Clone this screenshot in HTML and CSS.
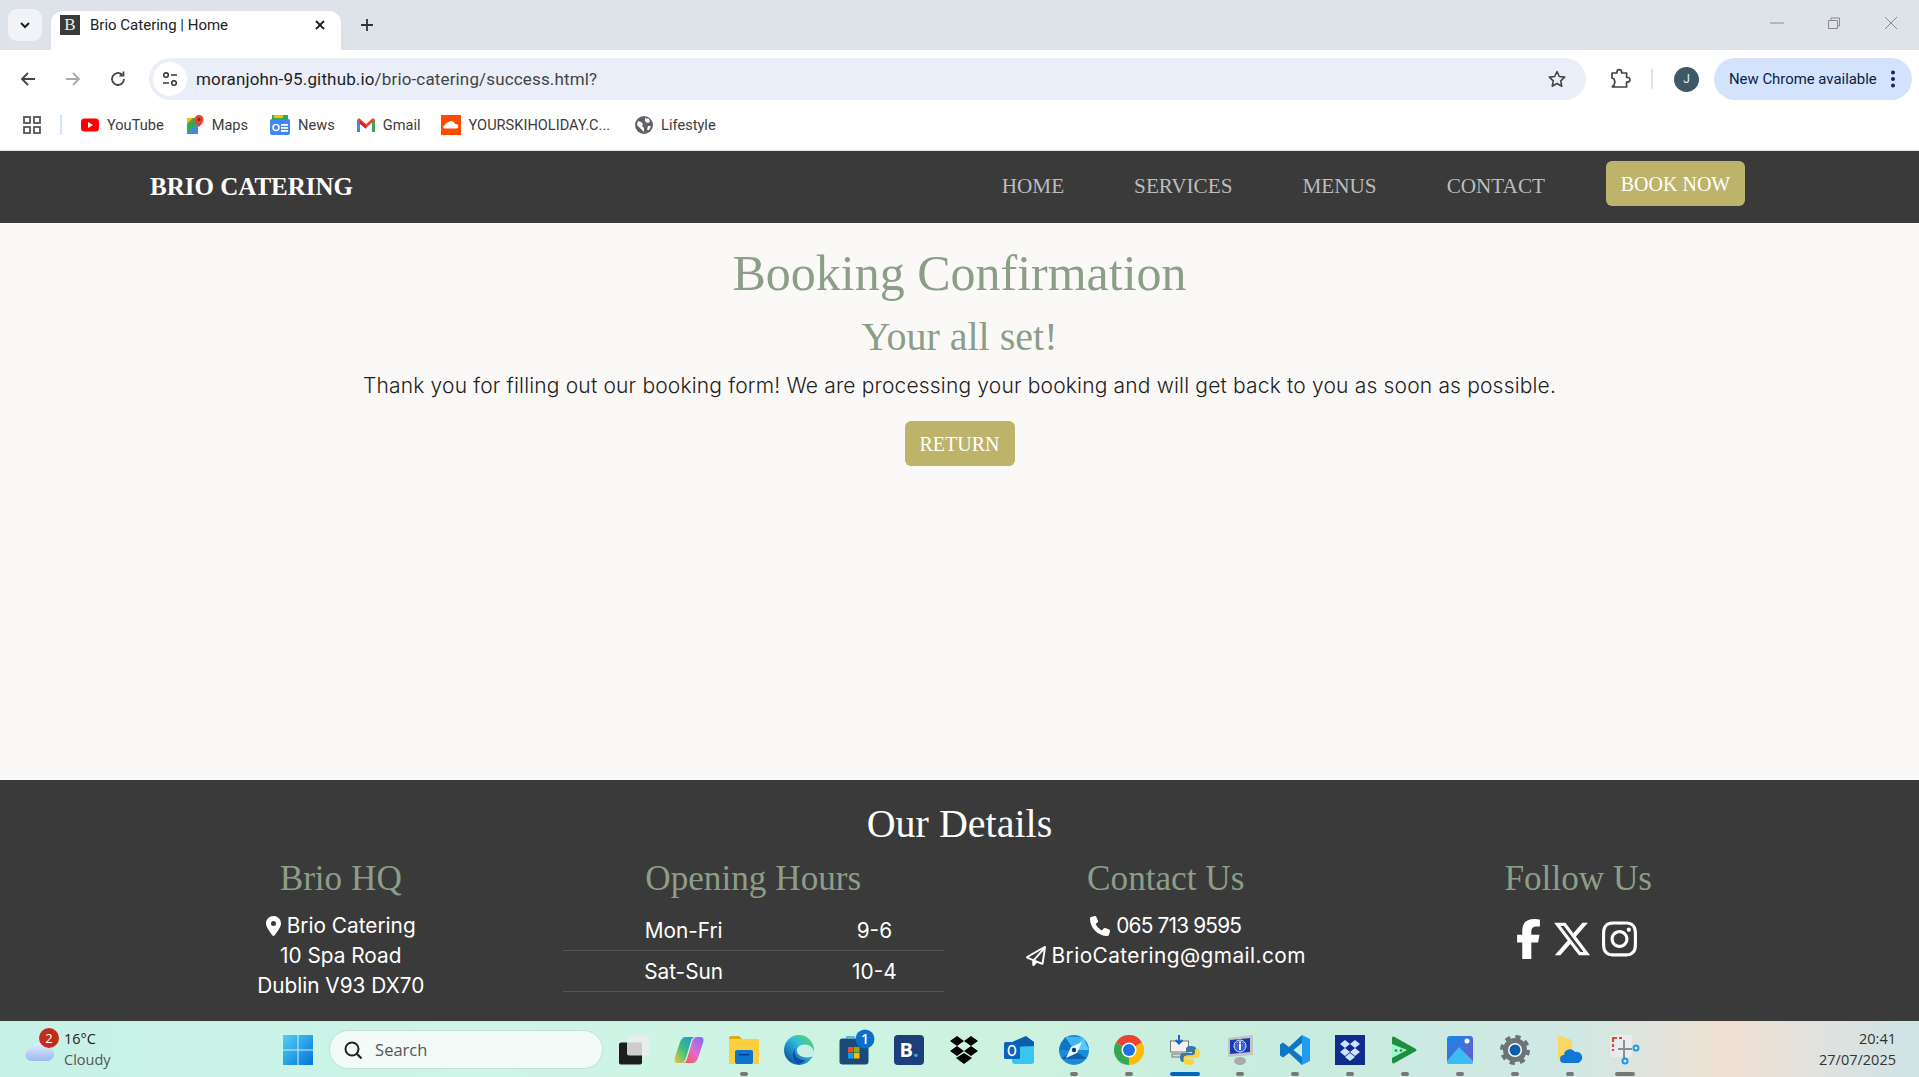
FILE: index.html
```html
<!DOCTYPE html>
<html lang="en">
<head>
<meta charset="utf-8">
<title>Brio Catering | Home</title>
<link rel="stylesheet" href="styles.css">
</head>
<body>
<div class="screen">
  <header class="browser">
    <div class="tabstrip">
      <button class="tab-search"><svg width="14" height="14" viewBox="0 0 14 14"><path d="M3 5l4 4 4-4" fill="none" stroke="#1f1f1f" stroke-width="2"/></svg></button>
      <div class="tab">
        <span class="favicon">B</span>
        <span class="tab-title">Brio Catering | Home</span>
        <svg class="tab-close" width="12" height="12" viewBox="0 0 12 12"><path d="M2 2l8 8M10 2l-8 8" stroke="#1f1f1f" stroke-width="1.8"/></svg>
      </div>
      <svg class="new-tab" width="14" height="14" viewBox="0 0 14 14"><path d="M7 1v12M1 7h12" stroke="#333" stroke-width="1.8"/></svg>
      <div class="win-controls">
        <svg width="14" height="14" viewBox="0 0 14 14"><path d="M0 7h14" stroke="#8a8a8a" stroke-width="1"/></svg>
        <svg width="14" height="14" viewBox="0 0 14 14"><path d="M1.500 4.500h9v8h-9zM4 4.500V2h8.500v8h-2" fill="none" stroke="#8a8a8a" stroke-width="1"/></svg>
        <svg width="14" height="14" viewBox="0 0 14 14"><path d="M1 1l12 12M13 1L1 13" stroke="#8a8a8a" stroke-width="1"/></svg>
      </div>
    </div>
    <div class="toolbar">
      <svg class="tool" width="18" height="18" viewBox="0 0 18 18"><path d="M16 9H3M9 3L3 9l6 6" fill="none" stroke="#444" stroke-width="1.8"/></svg>
      <svg class="tool" width="18" height="18" viewBox="0 0 18 18"><path d="M2 9h13M9 3l6 6-6 6" fill="none" stroke="#aaa" stroke-width="1.800"/></svg>
      <svg class="tool" width="18" height="18" viewBox="0 0 18 18"><path d="M15 9a6 6 0 1 1-2-4.500M14.500 1.500v4h-4" fill="none" stroke="#444" stroke-width="1.8"/></svg>
      <div class="omnibox">
        <span class="site-info"><svg width="16" height="16" viewBox="0 0 16 16"><circle cx="4" cy="4" r="2.300" fill="none" stroke="#333" stroke-width="1.500"/><path d="M9 4h6M1 12h6" stroke="#333" stroke-width="1.500"/><circle cx="12" cy="12" r="2.300" fill="none" stroke="#333" stroke-width="1.500"/></svg></span>
        <span class="url">moranjohn-95.github.io<span class="url-path">/brio-catering/success.html?</span></span>
        <svg class="star" width="20" height="20" viewBox="0 0 20 20"><path d="M10 2.500l2.300 5 5.400.6-4 3.700 1.100 5.400-4.800-2.700-4.800 2.700 1.100-5.400-4-3.700 5.400-.6z" fill="none" stroke="#444" stroke-width="1.600" stroke-linejoin="round"/></svg>
      </div>
      <svg class="puzzle" width="22" height="22" viewBox="0 0 22 22"><path d="M3 5h5V4a2.300 2.300 0 0 1 4.600 0v1h5v4.500h1a2.300 2.300 0 0 1 0 4.600h-1V19H3.500v-1H5v-1.500L6 14l-1-3-2-1z" fill="none" stroke="#444" stroke-width="1.700" stroke-linejoin="round"/></svg>
      <span class="tool-divider"></span>
      <span class="avatar">J</span>
      <div class="update-pill">
        <span>New Chrome available</span>
        <svg width="6" height="18" viewBox="0 0 6 18"><circle cx="3" cy="2.500" r="2" fill="#0b2a66"/><circle cx="3" cy="9" r="2" fill="#0b2a66"/><circle cx="3" cy="15.500" r="2" fill="#0b2a66"/></svg>
      </div>
    </div>
    <div class="bookmarks">
      <svg class="apps" width="18" height="18" viewBox="0 0 18 18"><g fill="none" stroke="#555" stroke-width="1.800"><rect x="1" y="1" width="6" height="6"/><rect x="11" y="1" width="6" height="6"/><rect x="1" y="11" width="6" height="6"/><rect x="11" y="11" width="6" height="6"/></g></svg>
      <span class="bm-divider"></span>
      <a class="bm"><svg width="18" height="18" viewBox="0 0 18 18"><rect y="2.500" width="18" height="13" rx="3.500" fill="#f00"/><path d="M7 6l5 3-5 3z" fill="#fff"/></svg>YouTube</a>
      <a class="bm"><svg width="18" height="20" viewBox="0 0 18 20"><path d="M1 3h11v16H1z" fill="#34a853"/><path d="M1 19l11-11v11z" fill="#4285f4"/><path d="M1 3h6L1 9z" fill="#fbbc04"/><path d="M13 0a4.500 4.500 0 0 1 4.500 4.500C17.500 8 13 12 13 12S8.500 8 8.500 4.500A4.500 4.500 0 0 1 13 0z" fill="#ea4335"/><circle cx="13" cy="4.500" r="1.500" fill="#8c1c13"/></svg>Maps</a>
      <a class="bm"><svg width="20" height="20" viewBox="0 0 20 20"><path d="M2 0h16v8H2z" fill="#34a853"/><path d="M4 0h9v3H4z" fill="#fbbc04"/><rect y="4" width="20" height="16" rx="2" fill="#4285f4"/><rect x="11" y="9" width="7" height="1.800" fill="#fff"/><rect x="11" y="12" width="7" height="1.800" fill="#fff"/><rect x="11" y="15" width="7" height="1.800" fill="#fff"/><circle cx="6" cy="12.500" r="3" fill="none" stroke="#fff" stroke-width="1.500"/></svg>News</a>
      <a class="bm bm-gmail"><svg width="18" height="14" viewBox="0 0 18 14"><path d="M0 14V2l3 1v11z" fill="#4285f4"/><path d="M15 14V3l3-1v12z" fill="#34a853"/><path d="M0 2l2-2 7 6 7-6 2 2-9 8z" fill="#ea4335"/><path d="M3 3l6 5v3L3 6z" fill="#c5221f"/></svg>Gmail</a>
      <a class="bm bm-ski"><svg width="20" height="20" viewBox="0 0 20 20"><rect width="20" height="20" fill="#ff4a00"/><path d="M3 13.500a2 2 0 0 1 1-3.500 3 3 0 0 1 3-2.500 4 4 0 0 1 7 1.500h1.500a2.300 2.300 0 0 1 0 4.500z" fill="#fff"/></svg>YOURSKIHOLIDAY.C...</a>
      <a class="bm"><svg width="18" height="18" viewBox="0 0 18 18"><circle cx="9" cy="9" r="9" fill="#5f6368"/><path d="M3 5l3 1 2 2-1 2 2 2v4L5 12 2 9zM10 2l4 1 1 3-3 1-2-2zM13 10l3 0-2 4-2 0z" fill="#fff"/></svg>Lifestyle</a>
    </div>
  </header>

  <nav class="site-nav">
    <a class="brand">BRIO CATERING</a>
    <ul class="nav-links">
      <li>HOME</li>
      <li>SERVICES</li>
      <li>MENUS</li>
      <li>CONTACT</li>
    </ul>
    <a class="btn btn-nav">BOOK NOW</a>
  </nav>

  <main class="content">
    <h1>Booking Confirmation</h1>
    <h2>Your all set!</h2>
    <p>Thank you for filling out our booking form! We are processing your booking and will get back to you as soon as possible.</p>
    <a class="btn btn-return">RETURN</a>
  </main>

  <footer class="site-footer">
    <h2 class="footer-title">Our Details</h2>
    <div class="footer-grid">
      <section class="col">
        <h3>Brio HQ</h3>
        <p class="line"><svg class="ico" viewBox="0 0 384 512" width="15" height="20"><path d="M215.700 499.200C267 435 384 279.400 384 192C384 86 298 0 192 0S0 86 0 192c0 87.400 117 243 168.300 307.200c12.300 15.300 35.100 15.300 47.400 0zM192 128a64 64 0 1 1 0 128 64 64 0 1 1 0-128z"/></svg> Brio Catering</p>
        <p class="line">10 Spa Road</p>
        <p class="line">Dublin V93 DX70</p>
      </section>
      <section class="col">
        <h3>Opening Hours</h3>
        <div class="hours">
          <div class="row"><span>Mon-Fri</span><span>9-6</span></div>
          <div class="row"><span>Sat-Sun</span><span>10-4</span></div>
        </div>
      </section>
      <section class="col">
        <h3>Contact Us</h3>
        <p class="line"><svg class="ico" viewBox="0 0 512 512" width="20" height="20"><path d="M164.900 24.600c-7.700-18.600-28-28.500-47.400-23.200l-88 24C12.100 30.200 0 46 0 64C0 311.400 200.600 512 448 512c18 0 33.800-12.100 38.600-29.500l24-88c5.300-19.400-4.600-39.700-23.200-47.400l-96-40c-16.300-6.800-35.200-2.100-46.300 11.600L304.700 368C234.300 334.700 177.300 277.700 144 207.300L193.300 167c13.700-11.200 18.400-30 11.600-46.300l-40-96z"/></svg> <span class="phone">065 713 9595</span></p>
        <p class="line"><svg class="ico" viewBox="0 0 512 512" width="20" height="20"><path d="M16.100 260.200c-22.600 12.900-20.500 47.300 3.600 57.300L160 376V479.300c0 18.100 14.600 32.700 32.700 32.700c9.700 0 18.900-4.300 25.100-11.800l62-74.300 123.900 51.600c18.900 7.900 40.800-4.500 43.900-24.700l64-416c1.900-12.100-3.400-24.300-13.500-31.200s-23.300-7.500-34-1.400l-448 256zm52.100 25.500L409.700 90.600 190.100 336l1.200 1L68.200 285.700zM403.300 425.400L236.700 355.900 450.800 116.600 403.300 425.400z"/></svg> <span class="email">BrioCatering@gmail.com</span></p>
      </section>
      <section class="col">
        <h3>Follow Us</h3>
        <div class="social">
          <svg class="ico ico-f" viewBox="0 0 320 512" width="25" height="40"><path d="M80 299.300V512H196V299.300h86.500l18-97.800H196V166.900c0-51.700 20.300-71.500 72.700-71.500c16.300 0 29.400 .4 37 1.200V7.900C291.400 4 256.400 0 236.200 0C129.300 0 80 50.500 80 159.400v42.100H14v97.800H80z"/></svg>
          <svg class="ico" viewBox="0 0 512 512" width="40" height="40"><path d="M389.200 48h70.600L305.600 224.200 487 464H345L233.700 318.600 106.500 464H35.800L200.700 275.500 26.800 48H172.400L272.900 180.900 389.200 48zM364.400 421.800h39.100L151.100 88h-42L364.400 421.800z"/></svg>
          <svg class="ico" viewBox="0 0 448 512" width="35" height="40"><path d="M224.100 141c-63.600 0-114.900 51.300-114.900 114.900s51.300 114.900 114.900 114.900S339 319.500 339 255.900 287.700 141 224.100 141zm0 189.600c-41.100 0-74.700-33.500-74.700-74.700s33.500-74.700 74.700-74.700 74.700 33.500 74.700 74.700-33.600 74.700-74.700 74.700zm146.400-194.300c0 14.900-12 26.800-26.800 26.800-14.900 0-26.800-12-26.800-26.800s12-26.800 26.800-26.800 26.800 12 26.800 26.800zm76.100 27.200c-1.700-35.900-9.900-67.700-36.200-93.900-26.200-26.200-58-34.400-93.900-36.200-37-2.100-147.900-2.100-184.900 0-35.800 1.700-67.600 9.900-93.900 36.100s-34.400 58-36.200 93.900c-2.100 37-2.100 147.900 0 184.900 1.700 35.900 9.900 67.700 36.200 93.900s58 34.400 93.900 36.200c37 2.100 147.900 2.100 184.900 0 35.900-1.700 67.700-9.900 93.900-36.200 26.200-26.200 34.400-58 36.200-93.900 2.100-37 2.100-147.800 0-184.800zM398.800 388c-7.800 19.600-22.900 34.700-42.600 42.600-29.500 11.700-99.500 9-132.100 9s-102.700 2.600-132.100-9c-19.600-7.800-34.700-22.900-42.600-42.600-11.700-29.500-9-99.500-9-132.100s-2.600-102.700 9-132.100c7.800-19.600 22.900-34.700 42.600-42.600 29.500-11.700 99.500-9 132.100-9s102.700-2.600 132.100 9c19.600 7.800 34.700 22.900 42.600 42.600 11.700 29.500 9 99.500 9 132.100s2.700 102.700-9 132.100z"/></svg>
        </div>
      </section>
    </div>
  </footer>

  <div class="taskbar">
    <div class="weather">
      <span class="badge">2</span>
      <svg width="30" height="24" viewBox="0 0 30 24"><defs><linearGradient id="cl" x1="0" y1="0" x2="0" y2="1"><stop offset="0" stop-color="#e4eefc"/><stop offset="1" stop-color="#9db8ee"/></linearGradient></defs><path d="M7 23a6 6 0 0 1-1-12 8 8 0 0 1 15-2 7 7 0 0 1 2 14z" fill="url(#cl)"/></svg>
      <div class="weather-text"><span>16°C</span><span class="muted">Cloudy</span></div>
    </div>
    <div class="tb-items">
      <span class="tb"><svg width="30" height="30" viewBox="0 0 30 30"><defs><linearGradient id="win" x1="0" y1="0" x2="1" y2="1"><stop offset="0" stop-color="#4fd0fb"/><stop offset="1" stop-color="#0673d6"/></linearGradient></defs><path d="M0 0h14.500v14.500H0zM15.500 0H30v14.500H15.500zM0 15.500h14.500V30H0zM15.500 15.500H30V30H15.500z" fill="url(#win)"/></svg></span>
      <div class="tb-search"><svg width="20" height="20" viewBox="0 0 20 20"><circle cx="9" cy="9" r="6.500" fill="none" stroke="#222" stroke-width="2"/><path d="M13.500 13.500l5 5" stroke="#222" stroke-width="2.300"/></svg><span>Search</span></div>
      <span class="tb"><svg width="30" height="30" viewBox="0 0 30 30"><rect x="0" y="7.500" width="23" height="22" rx="2" fill="#1d1d1d"/><rect x="8" y="0.500" width="22" height="20" rx="2" fill="#ececec" fill-opacity=".85"/></svg></span>
      <span class="tb"><svg width="30" height="30" viewBox="0 0 30 30"><defs><linearGradient id="cop1" x1="1" y1="0" x2="0" y2="1"><stop offset="0" stop-color="#1a8fe8"/><stop offset=".55" stop-color="#3fc07a"/><stop offset="1" stop-color="#f6c83c"/></linearGradient><linearGradient id="cop2" x1="1" y1="0" x2="0" y2="1"><stop offset="0" stop-color="#7c6cf0"/><stop offset=".5" stop-color="#e36ad0"/><stop offset="1" stop-color="#f4573c"/></linearGradient></defs><path d="M11 2h11c-3 0-4 1-5 4l-5 17c-.8 3-3 5-5 5H3c-2 0-3-2-2.300-5L6 7c1-3 3-5 5-5z" fill="url(#cop1)"/><path d="M19 28H8c3 0 4-1 5-4l5-17c.8-3 3-5 5-5h4c2 0 3 2 2.300 5L24 23c-1 3-3 5-5 5z" fill="url(#cop2)"/></svg></span>
      <span class="tb dot"><svg width="30" height="28" viewBox="0 0 30 28"><path d="M0 2a2 2 0 0 1 2-2h8l3 3H0z" fill="#e3a71c"/><rect y="3" width="30" height="25" fill="#fccf3e"/><rect x="6" y="14" width="18" height="14" rx="2" fill="#0b74cf"/><rect x="10" y="18" width="10" height="1.500" fill="#0a3f85"/></svg></span>
      <span class="tb"><svg width="30" height="30" viewBox="0 0 30 30"><defs><linearGradient id="edge" x1=".9" y1=".1" x2=".2" y2=".9"><stop offset="0" stop-color="#58d36c"/><stop offset=".4" stop-color="#2fbcd8"/><stop offset="1" stop-color="#0c5aa8"/></linearGradient></defs><circle cx="15" cy="15" r="15" fill="url(#edge)"/><path class="cut" d="M30 17c-1-6-7-9-13-7-4 1.500-5 5-3.500 8 2 4 9 6 16 3z"/><path d="M13.500 12c-4 2-4 8 0 11 2 1.500 5 2.500 8 2-2 2-5 4-8 4-5-4-7-13 0-17z" fill="#0c4ea3"/></svg></span>
      <span class="tb"><svg class="tb-over" width="30" height="36" viewBox="0 0 30 36"><path d="M8 6.500V5h8" fill="none" stroke="#5ab8f0" stroke-width="1.800"/><rect x="0.500" y="6.500" width="29" height="26" rx="3" fill="#1c4a78"/><rect x="9" y="15" width="5.500" height="5.500" fill="#f25022"/><rect x="15" y="15" width="5.500" height="5.500" fill="#7fba00"/><rect x="9" y="21" width="5.500" height="5.500" fill="#00a4ef"/><rect x="15" y="21" width="5.500" height="5.500" fill="#ffb900"/><circle cx="26" cy="7" r="9.500" fill="#0c6fcb"/><text x="26" y="12" class="tb-count">1</text></svg></span>
      <span class="tb"><span class="booking">B<span class="booking-dot">.</span></span></span>
      <span class="tb"><svg width="30" height="28" viewBox="0 0 30 28"><path d="M8 0l7 5-7 5-7-5zM22 0l7 5-7 5-7-5zM8 10l7 5-7 5-7-5zM22 10l7 5-7 5-7-5zM15 17l8 5-8 6-8-6z"/></svg></span>
      <span class="tb"><svg width="30" height="28" viewBox="0 0 30 28"><path d="M8 6l14-6 8 6v8H8z" fill="#0b5ea8"/><path d="M8 11l22-1v15a3 3 0 0 1-3 3H11a3 3 0 0 1-3-3z" fill="#39c6ee"/><rect y="6" width="16" height="17" rx="1.500" fill="#0a64bf"/><ellipse cx="8" cy="14.500" rx="3.500" ry="4.800" fill="none" stroke="#fff" stroke-width="1.800"/></svg></span>
      <span class="tb dot"><svg width="30" height="30" viewBox="0 0 30 30"><circle cx="15" cy="15" r="15" fill="#1c8ad8"/><path d="M15 15L6 2h18z" fill="#3fb6f2"/><path d="M15 15L2 24h26z" fill="#0d62ad"/><path d="M15 15L0 15 6 2z" fill="#0e74c4"/><path d="M24 2l-9 13 15 0z" fill="#58c8f7"/><path d="M23 7l-5 11-11 5 5-11z" fill="#e8f6fd"/><circle cx="15" cy="15" r="2.200" fill="#0b3a75"/></svg></span>
      <span class="tb dot"><svg width="30" height="30" viewBox="0 0 30 30"><path d="M15 15L2 7.500A15 15 0 0 1 28 7.500z" fill="#ea4335"/><path d="M15 15L2 7.500A15 15 0 0 0 15 30z" fill="#34a853"/><path d="M15 15L28 7.500A15 15 0 0 1 15 30z" fill="#fbbc04"/><circle cx="15" cy="15" r="7.500" fill="#fff"/><circle cx="15" cy="15" r="6" fill="#1a73e8"/></svg></span>
      <span class="tb active"><svg width="30" height="30" viewBox="0 0 30 30"><rect x="0.500" y="6" width="18" height="11" fill="#f2f2f2" stroke="#777"/><path d="M9 0v7M5.500 5L9 8.500 12.500 5" fill="none" stroke="#1668c4" stroke-width="2"/><rect x="2" y="19" width="12" height="3" fill="#ddd" stroke="#777"/><path d="M21 11c-4 0-5 1.500-5 3.500V17h6v1h-9c-2 0-3 1.800-3 4.500S11 27 13 27h2v-3c0-2 1.500-3.500 3.500-3.500h5c2 0 3-1 3-3v-3c0-2-2-3.500-5.500-3.500z" fill="#3776ab"/><path d="M21 11c-4 0-5 1.500-5 3.500V17h6v1h-9c-2 0-3 1.800-3 4.500S11 27 13 27h2v-3c0-2 1.500-3.500 3.500-3.500h5c2 0 3-1 3-3v-3c0-2-2-3.500-5.500-3.500z" fill="#ffd43b" transform="rotate(180 20 20.500)"/></svg></span>
      <span class="tb dot"><svg width="28" height="30" viewBox="0 0 28 30"><path d="M2 3l25-3v20l-25 2z" fill="#c4c4c4"/><path d="M4 5l20-2v14l-20 2z" fill="#1a3bb0"/><circle cx="14" cy="11" r="6" fill="#3f62d8" stroke="#dfe6ff"/><rect x="13" y="9" width="2" height="6" fill="#fff"/><rect x="13" y="6.500" width="2" height="1.800" fill="#fff"/><ellipse cx="14" cy="26" rx="6" ry="4" fill="#aaa"/></svg></span>
      <span class="tb dot"><svg width="30" height="30" viewBox="0 0 30 30"><path d="M22 0L9 12 3 7.500 0 9.500v11l3 2L9 18l13 12v-8l-8.500-7L22 8z" fill="#0e76c2"/><path d="M22 0l8 4v22l-8 4z" fill="#1f9cf0"/></svg></span>
      <span class="tb dot"><svg width="30" height="30" viewBox="0 0 30 30"><rect width="30" height="30" fill="#0f2b8c"/><path d="M10 5l5 4-5 4-5-4zM20 5l5 4-5 4-5-4zM10 13l5 4-5 4-5-4zM20 13l5 4-5 4-5-4zM15 18l5 4-5 4-5-4z" fill="#cfe2ff"/></svg></span>
      <span class="tb dot"><svg width="25" height="28" viewBox="0 0 25 28"><path d="M0 2a1.500 1.500 0 0 1 2.200-1.300L24 13a1.500 1.500 0 0 1 0 2L2.200 27.300A1.500 1.500 0 0 1 0 26z" fill="#1e8e3e"/><path d="M0 8l15 6L0 22z" fill="#9ff5d0"/><circle cx="4" cy="14.500" r="1.300" fill="#1e8e3e"/><circle cx="9" cy="14.500" r="1.300" fill="#1e8e3e"/></svg></span>
      <span class="tb dot"><svg width="26" height="28" viewBox="0 0 26 28"><defs><linearGradient id="ph" x1="0" y1="0" x2="1" y2="1"><stop offset="0" stop-color="#1289e8"/><stop offset="1" stop-color="#7555c8"/></linearGradient></defs><rect width="26" height="28" rx="3" fill="url(#ph)"/><circle cx="20" cy="5" r="2.500" fill="#fff"/><path d="M0 25l12-14 14 14v1a2 2 0 0 1-2 2H2a2 2 0 0 1-2-2z" fill="#3dbcf4"/></svg></span>
      <span class="tb dot"><svg width="30" height="30" viewBox="0 0 30 30"><circle cx="15" cy="15" r="13" fill="none" stroke="#6e7378" stroke-width="4" stroke-dasharray="5.200 5"/><circle cx="15" cy="15" r="12" fill="#6e7378"/><circle cx="15" cy="15" r="7" fill="#fff"/><circle cx="15" cy="15" r="5.500" fill="#0b5ea8"/></svg></span>
      <span class="tb dot"><svg width="25" height="28" viewBox="0 0 25 28"><path d="M0 0h2l12 4v24L0 23z" fill="#fad765"/><path d="M6 27a4 4 0 0 1 0-8 6 6 0 0 1 11-3 5 5 0 0 1 3 11z" fill="#1177d6"/></svg></span>
      <span class="tb wide"><svg width="30" height="30" viewBox="0 0 30 30"><rect width="22" height="22" rx="2" fill="#e9ebee"/><path d="M3 7V3h4M9 3h3M3 9v3M3 14v2" fill="none" stroke="#d84a3a" stroke-width="2.200"/><path d="M14 5v20M8 14h14" stroke="#8b8f94" stroke-width="2"/><circle cx="26" cy="13" r="2.500" fill="none" stroke="#1c9ae8" stroke-width="2"/><circle cx="15" cy="26" r="2.500" fill="none" stroke="#1c9ae8" stroke-width="2"/></svg></span>
    </div>
    <div class="clock"><span>20:41</span><span>27/07/2025</span></div>
  </div>
</div>
</body>
</html>
```

FILE: styles.css
```css
* { box-sizing: border-box; }
html, body { margin: 0; padding: 0; }
body { font-family: "Liberation Serif", serif; background: #fbf9f7; overflow: hidden; }
.screen { height: 1077px; display: flex; flex-direction: column; }

/* browser chrome */
.browser { font-family: Roboto, "Open Sans", sans-serif; background: #fff; height: 151px; display: flex; flex-direction: column; border-bottom: 1px solid #e3e3e3; }
.tabstrip { height: 50px; background: #dee3ea; display: flex; align-items: flex-end; position: relative; }
.tab-search { width: 34px; height: 32px; margin: 0 9px 9px 8px; border: 0; border-radius: 9px; background: #f1f3f6; display: flex; align-items: center; justify-content: center; padding: 0; }
.tab { width: 290px; height: 39px; background: #fff; border-radius: 12px 12px 0 0; display: flex; align-items: center; padding: 0 15px 11px 9px; }
.favicon { width: 20px; height: 20px; background: #3a3a3a; color: #eee; font: 17px/20px "Liberation Serif", serif; text-align: center; }
.tab-title { margin-left: 10px; font-size: 15px; color: #222; flex: 1; }
.new-tab { margin: 0 0 18px 19px; }
.win-controls { margin-left: auto; display: flex; gap: 43px; padding: 0 21px 20px 0; }
.toolbar { height: 50px; display: flex; align-items: center; padding: 8px 0 0 19px; }
.tool { margin-right: 27px; }
.tool:nth-child(3) { margin-right: 24px; }
.omnibox { width: 1437px; height: 42px; background: #e9eef8; border-radius: 21px; display: flex; align-items: center; padding: 0 19px 0 4px; margin-left: -2px; }
.site-info { width: 34px; height: 34px; background: #fff; border-radius: 50%; display: flex; align-items: center; justify-content: center; }
.url { margin-left: 9px; font-size: 17px; letter-spacing: .15px; color: #1f1f1f; flex: 1; }
.url-path { color: #444; }
.puzzle { margin-left: 23px; }
.tool-divider { width: 2px; height: 20px; background: #d3e3fd; margin: 0 21px 0 20px; }
.avatar { width: 25px; height: 25px; border-radius: 50%; background: #3f5866; color: #e8eef2; font-size: 12px; display: flex; align-items: center; justify-content: center; }
.update-pill { width: 198px; height: 42px; margin-left: 15px; background: #d3e3fd; border-radius: 21px; display: flex; align-items: center; padding: 0 16px 0 15px; justify-content: space-between; color: #0b2149; font-size: 14.900px; }
.bookmarks { height: 50px; display: flex; align-items: center; padding-left: 23px; }
.bm-divider { width: 2px; height: 20px; background: #d3e3fd; margin: 0 19px 0 19px; }
.bm { display: flex; align-items: center; gap: 8px; font-size: 14.600px; color: #3c3c3c; margin-right: 22px; }
.bm-gmail { margin-right: 20px; }
.bm-ski { margin-right: 25px; }

/* site navigation */
.site-nav { height: 72px; background: #3a3a3a; display: flex; align-items: center; padding: 0 174px 2px 150px; flex: none; }
.brand { font-size: 25px; font-weight: 700; color: #fff; margin-top: 2px; }
.nav-links { list-style: none; display: flex; gap: 70px; margin: 0 61px 0 auto; padding: 0; font-size: 21.200px; color: #bcbcbc; }
.btn { background: #bdb36b; color: #fff; border-radius: 6px; font-size: 20px; padding-top: 1px; display: inline-flex; align-items: center; justify-content: center; }
.btn-nav { width: 139px; height: 45px; margin-top: -5px; }

/* main */
.content { height: 557px; flex: none; background: #fbf9f7; display: flex; flex-direction: column; align-items: center; padding-top: 19px; }
.content h1 { margin: 0; font-size: 50px; font-weight: 400; line-height: 62px; color: #8c9e88; }
.content h2 { margin: 5px 0 0; font-size: 40px; font-weight: 400; line-height: 56px; color: #8c9e88; }
.content p { margin: 5px 0 0; font-family: Inter, sans-serif; font-size: 21px; font-weight: 300; letter-spacing: .175px; line-height: 32px; color: #222; }
.btn-return { width: 110px; height: 45px; margin-top: 19px; }

/* footer */
.site-footer { height: 241px; flex: none; background: #3a3a3a; color: #fff; padding-top: 18px; }
.footer-title { margin: 0; text-align: center; font-size: 40px; font-weight: 400; line-height: 52px; }
.footer-grid { display: grid; grid-template-columns: repeat(4, 412.500px); justify-content: center; margin-top: 6px; }
.col { padding: 0 12px; text-align: center; font-family: Inter, sans-serif; font-size: 20.800px; }
.col h3 { margin: 0 0 9px; font: 400 35.200px/46px "Liberation Serif", serif; color: #8c9e88; }
.line { margin: 0; line-height: 30px; display: block; }
.phone { letter-spacing: -.8px; }
.email { letter-spacing: .45px; }
.ico { fill: #fff; vertical-align: -3px; }
.hours { margin: -1px 3.500px 0; }
.row { display: grid; grid-template-columns: 63.500% 36.500%; height: 41px; align-items: center; border-bottom: 1px solid #555; }
.social { display: flex; justify-content: center; gap: 10px; padding: 8px 4px 0 0; }
.ico-f { margin-right: 1px; }

/* taskbar */
.taskbar { flex: 1; position: relative; display: flex; align-items: center; font-family: "Open Sans", sans-serif; border-top: 1px solid #d8e4e0; background: linear-gradient(90deg, #c6f1e6 0%, #cdf5e8 25%, #cdf3e0 50%, #c8ecdf 68%, #d0e8e4 82%, #f0e0d2 90%, #dfe2de 95%, #cfe3e6 100%); }
.weather { width: 270px; padding-left: 25px; display: flex; align-items: center; gap: 9px; position: relative; font-size: 14.500px; color: #1c1c1c; }
.badge { position: absolute; left: 39px; top: 0; width: 20px; height: 20px; border-radius: 50%; background: #c42b1c; color: #fff; font-size: 13px; display: flex; align-items: center; justify-content: center; z-index: 1; }
.weather-text { display: flex; flex-direction: column; line-height: 21px; padding-bottom: 2px; }
.muted { color: #555; }
.tb-items { display: flex; align-items: center; }
.tb { width: 55.100px; height: 54px; display: flex; align-items: center; justify-content: center; position: relative; }
.tb-search { width: 274px; height: 39px; border-radius: 20px; background: #f2fbf8; border: 1px solid #c5e0d7; margin: 0 3px 0 4px; display: flex; align-items: center; gap: 12px; padding-left: 13px; font-size: 16.500px; color: #555; }
.dot::after, .wide::after, .active::after { content: ""; position: absolute; left: 50%; bottom: 1px; width: 8px; height: 4px; margin-left: -4px; border-radius: 2px; background: #777; }
.wide::after { width: 20px; margin-left: -10px; }
.active::after { width: 30px; margin-left: -15px; background: #0067c0; }
.tb-over { overflow: visible; }
.tb-count { font: 600 14px "Open Sans", sans-serif; fill: #fff; text-anchor: middle; }
.cut { fill: #cdeee2; }
.booking { width: 30px; height: 30px; background: #1c3f7c; color: #fff; border-radius: 4px; font: 700 20px/30px "Open Sans", sans-serif; text-align: center; }
.booking-dot { color: #2bb0ea; }
.clock { margin-left: auto; padding: 0 23px 2px 0; display: flex; flex-direction: column; align-items: flex-end; line-height: 21px; font-size: 14.500px; color: #333; }
```
